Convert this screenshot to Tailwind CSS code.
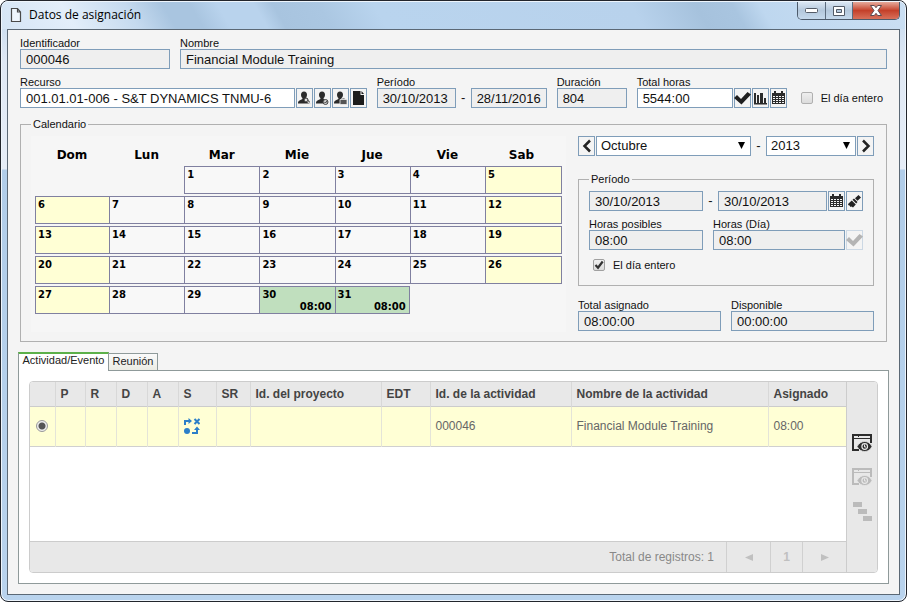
<!DOCTYPE html>
<html lang="es">

<head>
    <meta charset="UTF-8">
    <meta name="viewport" content="width=device-width, initial-scale=1.0">
    <title>Datos de asignación</title>
    <script src="https://cdn.jsdelivr.net/npm/@tailwindcss/browser@4"></script>
</head>

<body class="bg-white font-['Liberation_Sans',Arial,sans-serif] text-[11px] leading-3 text-[#111]">

<!-- Icon sprites -->
<svg class="hidden">
    <symbol id="user" viewBox="0 0 15 16">
        <path fill="#2b2b2b" d="M7 1.500c2 0 3 1.300 3 3.200 0 1.500-.6 2.700-1.400 3.400v1l3 1.300c1 .5 1.400 1.200 1.400 2.600v.5H1V13c0-1.400.5-2.100 1.500-2.600l2.900-1.300v-1C4.600 7.400 4 6.200 4 4.700c0-1.900 1-3.200 3-3.200z" />
    </symbol>
    <symbol id="calendar" viewBox="0 0 15 16">
        <path fill="#2b2b2b" d="M1 3h2V1h2v2h5V1h2v2h2v11H1z" />
        <path stroke="#f4f4f4" stroke-width="1" d="M2 6.500h11M2 8.500h11M2 10.500h11M2 12.500h11" stroke-dasharray="2 1" />
    </symbol>
    <symbol id="check" viewBox="0 0 17 16">
        <path fill="currentColor" d="M0 8l3-3 4 4 6.500-7L17 4.500 7.500 14.500z" />
    </symbol>
    <symbol id="view" viewBox="0 0 20 18">
        <path fill="none" stroke="currentColor" stroke-width="2" d="M7 16H1V1h18v8" />
        <path stroke="currentColor" stroke-width="1" d="M1 4.500h18M4 2.500h1M6 2.500h1" />
        <path stroke="#e8e8e8" stroke-width="1" d="M2 2.500h1M4 2.500h1M7 2.500h11" />
        <path fill="currentColor" stroke="#e8e8e8" stroke-width=".8" d="M5 12.500C7 9.200 9.500 7.500 12.700 7.500S18.300 9.200 20 12.500c-1.700 3.300-4 5-7.300 5S7 15.800 5 12.500z" />
        <circle cx="12.700" cy="12.500" r="2.800" fill="none" stroke="#e8e8e8" stroke-width="1.200" />
        <path stroke="#e8e8e8" d="M12.500 10.500v2.500h1.500" fill="none" />
    </symbol>
</svg>

<!-- Window frame -->
<div class="min-h-screen flex flex-col border border-[#22252c] rounded-lg px-[6px] pb-[6px] shadow-[inset_0_0_0_1px_#eef5fc] bg-[linear-gradient(180deg,#c3d9ef_0px,#dfe8f4_60px,#e6edf7_168px,#b1cde9_169px,#b9d3ed_100%)]">

    <!-- Title bar -->
    <header class="-mx-[5px] h-7 flex items-start rounded-t-md border-t border-[#eef5fc] bg-[linear-gradient(60deg,#d5e5f5_0%,#e3eefa_8%,#c5daef_15%,#a9c5e0_19%,#a9c5e0_22%,#b9d3ed_25%,#b9d3ed_29%,#a8c4df_31%,#abc7e2_36%,#b9d4ee_42%,#b8d2ec_70%,#a6c2dd_77%,#a9c5e0_81%,#bed7ef_84%,#cbdff3_100%)]">
        <div class="flex items-center gap-[7px] pl-2 pt-[5px]">
            <svg class="w-3 h-4" viewBox="0 0 12 16">
                <path fill="#eef5fc" stroke="#4a4a4a" stroke-width="1.200" d="M1.500 1.500h6l3 3.500v9.500h-9zM7.500 1.500V5h3" />
            </svg>
            <h1 class="font-['Open_Sans','Noto_Sans',sans-serif] text-xs leading-4 text-black">Datos de asignación</h1>
        </div>
        <div class="ml-auto mr-[5px] flex h-[18px] border border-t-0 border-[#4d5b6b] rounded-b-[5px] overflow-hidden">
            <button aria-label="Minimizar" class="w-[28px] flex justify-center items-center border-r border-[#5c6c7e] bg-linear-to-b from-[#dbe7f3] via-[#b4c8dc] to-[#c5d9ec]">
                <svg class="w-[13px] h-[5px]" viewBox="0 0 13 5"><rect x=".5" y=".5" width="12" height="4" rx="1" fill="#fff" stroke="#535b66" /></svg>
            </button>
            <button aria-label="Maximizar" class="w-[27px] flex justify-center items-center border-r border-[#5c6c7e] bg-linear-to-b from-[#dbe7f3] via-[#b4c8dc] to-[#c5d9ec]">
                <svg class="w-3 h-[10px]" viewBox="0 0 12 10"><path fill="#fff" fill-rule="evenodd" stroke="#535b66" d="M.5.5h11v9H.5zM3.500 3.500h5v3h-5z" /></svg>
            </button>
            <button aria-label="Cerrar" class="w-[46px] flex justify-center items-center bg-linear-to-b from-[#e5a99b] via-[#c4402a] to-[#d8705a]">
                <svg class="w-3 h-[11px]" viewBox="0 0 12 11"><path fill="#fff" stroke="#5d4a50" d="M.5.5h3.800L6 2.700 7.700.5h3.800L8 5.500l3.500 5H7.700L6 8.300l-1.700 2.200H.5L4 5.500z" /></svg>
            </button>
        </div>
    </header>

    <main class="flex-1 flex flex-col border border-[#5b6875] bg-[#f4f4f4] pt-[7px]">

        <!-- Assignment data -->
        <div class="px-3 flex flex-col gap-[7px]">
            <div class="flex gap-[10px]">
                <div class="w-[150px]">
                    <label for="identificador" class="block">Identificador</label>
                    <input id="identificador" readonly value="000046" class="block w-full h-5 px-[5px] text-[13px] border border-[#7f9db9] bg-[#efefef]">
                </div>
                <div class="flex-1">
                    <label for="nombre" class="block">Nombre</label>
                    <input id="nombre" readonly value="Financial Module Training" class="block w-full h-5 px-[5px] text-[13px] border border-[#7f9db9] bg-[#efefef]">
                </div>
            </div>

            <div class="flex items-end gap-[10px]">
                <div class="flex-1">
                    <label for="recurso" class="block">Recurso</label>
                    <div class="flex gap-px">
                        <input id="recurso" value="001.01.01-006 - S&amp;T DYNAMICS TNMU-6" class="flex-1 min-w-0 h-5 px-[5px] text-[13px] border border-[#7f9db9] bg-white">
                        <button aria-label="Buscar recurso" class="w-[17px] h-5 flex items-center justify-center border border-[#7f9db9]">
                            <svg class="w-[15px] h-4" viewBox="0 0 15 16"><use href="#user" /><circle cx="9" cy="10" r="2" fill="#ddd" stroke="#2b2b2b" /><path d="M10.500 11.500l3 2.500" stroke="#ddd" stroke-width="1.200" /></svg>
                        </button>
                        <button aria-label="Horario del recurso" class="w-[17px] h-5 flex items-center justify-center border border-[#7f9db9]">
                            <svg class="w-[15px] h-4" viewBox="0 0 15 16"><use href="#user" /><circle cx="10.500" cy="12" r="2.500" fill="#ccc" stroke="#444" /><path d="M9.500 12l1 1 1.500-2" stroke="#444" fill="none" /></svg>
                        </button>
                        <button aria-label="Agenda del recurso" class="w-[17px] h-5 flex items-center justify-center border border-[#7f9db9]">
                            <svg class="w-[15px] h-4" viewBox="0 0 15 16"><use href="#user" /><path d="M7 9.500h7v5H7zM9 9.500V8h3v1.500" fill="#555" stroke="#eee" stroke-width=".8" /></svg>
                        </button>
                        <button aria-label="Documento" class="w-[17px] h-5 flex items-center justify-center border border-[#7f9db9]">
                            <svg class="w-[15px] h-4" viewBox="0 0 15 16"><path fill="#1c1c1c" d="M2 1h7.500v4H13v10H2zM10.500 1L13 4h-2.500z" /></svg>
                        </button>
                    </div>
                </div>
                <fieldset class="flex items-end">
                    <div class="w-[79px]">
                        <label for="desde" class="block">Período</label>
                        <input id="desde" readonly value="30/10/2013" class="block w-full h-5 px-[5px] text-[13px] border border-[#7f9db9] bg-[#efefef]">
                    </div>
                    <span class="w-[15px] h-4 text-center text-[13px]">-</span>
                    <input aria-label="Hasta" readonly value="28/11/2016" class="w-[76px] h-5 px-[5px] text-[13px] border border-[#7f9db9] bg-[#efefef]">
                </fieldset>
                <div class="w-[70px]">
                    <label for="duracion" class="block">Duración</label>
                    <input id="duracion" readonly value="804" class="block w-full h-5 px-[5px] text-[13px] border border-[#7f9db9] bg-[#efefef]">
                </div>
                <div>
                    <label for="total" class="block">Total horas</label>
                    <div class="flex gap-px">
                        <input id="total" value="5544:00" class="w-24 h-5 px-[5px] text-[13px] border border-[#7f9db9] bg-white">
                        <button aria-label="Aplicar" class="w-[17px] h-5 flex items-center justify-center border border-[#7f9db9] text-[#1f1f1f]">
                            <svg class="w-[17px] h-4 shrink-0"><use href="#check" /></svg>
                        </button>
                        <button aria-label="Gráfico" class="w-[17px] h-5 flex items-center justify-center border border-[#7f9db9]">
                            <svg class="w-[15px] h-4" viewBox="0 0 15 16"><path fill="#2b2b2b" d="M1 3h2v10H1zM4 5h2v8H4zM7 3h3v10H7zM11 8h2v5h-2zM1 13h13v1.500H1z" /></svg>
                        </button>
                        <button aria-label="Calendario" class="w-[17px] h-5 flex items-center justify-center border border-[#7f9db9]">
                            <svg class="w-[15px] h-4"><use href="#calendar" /></svg>
                        </button>
                    </div>
                </div>
                <label class="h-5 ml-1 pr-1 flex items-center gap-2">
                    <input type="checkbox" class="appearance-none size-3 border border-[#b0b0b0] rounded-xs bg-linear-to-b from-[#eee] to-[#dcdcdc]">
                    El día entero
                </label>
            </div>
        </div>

        <!-- Calendar -->
        <fieldset class="mx-3 mt-[10px] px-[10px] pb-[9px] border border-[#b0b0b0] min-w-0">
            <legend class="px-[2px]">Calendario</legend>
            <div class="flex gap-3 pt-[6px] pr-[2px]">
                <div class="flex-1 px-1 pt-1 pb-4 bg-[#f6f6f6]">
                    <table class="w-full table-fixed border-separate border-spacing-x-0 border-spacing-y-[2px] font-['DejaVu_Sans',Verdana,sans-serif] font-bold text-[10px] text-black">
                        <thead>
                            <tr class="h-[22px] text-xs">
                                <th class="w-[74px] pt-1">Dom</th>
                                <th class="pt-1">Lun</th>
                                <th class="pt-1">Mar</th>
                                <th class="pt-1">Mie</th>
                                <th class="pt-1">Jue</th>
                                <th class="pt-1">Vie</th>
                                <th class="w-[77px] pt-1 pr-1">Sab</th>
                            </tr>
                        </thead>
                        <tbody id="days">
                            <!-- Updated dynamically -->
                        </tbody>
                    </table>
                </div>

                <div class="w-[296px] text-[11px]">
                    <!-- Month selector -->
                    <div class="flex items-center gap-px">
                        <button aria-label="Mes anterior" class="w-[17px] h-5 flex items-center justify-center border border-[#7f9db9]">
                            <svg class="w-[10px] h-[14px]" viewBox="0 0 10 14"><path d="M8 1.500L2.500 7 8 12.500" fill="none" stroke="#222" stroke-width="2.500" /></svg>
                        </button>
                        <div class="relative flex-1">
                            <select aria-label="Mes" class="appearance-none block w-full h-5 px-1 text-[13px] leading-[18px] border border-[#7f9db9] bg-white">
                                <option>Octubre</option>
                            </select>
                            <svg class="absolute right-[6px] top-[6px] w-[7px] h-[7px] pointer-events-none" viewBox="0 0 7 7"><path d="M0 0h7L3.500 7z" /></svg>
                        </div>
                        <span class="w-[13px] text-center text-[13px]">-</span>
                        <div class="relative w-[90px]">
                            <select aria-label="Año" class="appearance-none block w-full h-5 px-1 text-[13px] leading-[18px] border border-[#7f9db9] bg-white">
                                <option>2013</option>
                            </select>
                            <svg class="absolute right-[6px] top-[6px] w-[7px] h-[7px] pointer-events-none" viewBox="0 0 7 7"><path d="M0 0h7L3.500 7z" /></svg>
                        </div>
                        <button aria-label="Mes siguiente" class="w-[17px] h-5 flex items-center justify-center border border-[#7f9db9]">
                            <svg class="w-[10px] h-[14px]" viewBox="0 0 10 14"><path d="M2 1.500L7.500 7 2 12.500" fill="none" stroke="#222" stroke-width="2.500" /></svg>
                        </button>
                    </div>

                    <!-- Period -->
                    <fieldset class="mt-[17px] min-w-0 px-[10px] pb-[14px] border border-[#b0b0b0]">
                        <legend class="px-[2px]">Período</legend>
                        <div class="flex items-center gap-px pt-[6px]">
                            <input aria-label="Desde" readonly value="30/10/2013" class="w-[114px] h-5 px-[5px] text-[13px] border border-[#7f9db9] bg-[#efefef]">
                            <span class="w-[13px] text-center text-[13px]">-</span>
                            <input aria-label="Hasta" readonly value="30/10/2013" class="flex-1 min-w-0 h-5 px-[5px] text-[13px] border border-[#7f9db9] bg-[#efefef]">
                            <button aria-label="Elegir fecha" class="w-[17px] h-5 flex items-center justify-center border border-[#7f9db9]">
                                <svg class="w-[15px] h-4"><use href="#calendar" /></svg>
                            </button>
                            <button aria-label="Limpiar" class="w-[17px] h-5 flex items-center justify-center border border-[#7f9db9]">
                                <svg class="w-[15px] h-4" viewBox="0 0 15 16"><path fill="#222" d="M11.500 2L14 4.500l-3.500 3.200L8 5.200zM7 5.500L10.500 9 9.200 10.500 5.500 6.800zM4.800 7.500l4 4L6 14.500l-1.500-1-1 .5-1-1.500L1 12l.5-1.500z" /></svg>
                            </button>
                        </div>
                        <div class="flex items-end mt-[7px]">
                            <div class="w-[114px] mr-[10px]">
                                <label for="posibles" class="block">Horas posibles</label>
                                <input id="posibles" readonly value="08:00" class="block w-full h-5 px-[5px] text-[13px] border border-[#7f9db9] bg-[#efefef]">
                            </div>
                            <div class="flex-1 min-w-0 mr-px">
                                <label for="dia" class="block">Horas (Día)</label>
                                <input id="dia" readonly value="08:00" class="block w-full h-5 px-[5px] text-[13px] border border-[#7f9db9] bg-[#efefef]">
                            </div>
                            <button aria-label="Aplicar horas" disabled class="w-[17px] h-5 flex items-center justify-center border border-[#ccd8e4] text-[#b4b4b4]">
                                <svg class="w-[17px] h-4 shrink-0"><use href="#check" /></svg>
                            </button>
                        </div>
                        <label class="mt-[9px] ml-1 flex items-center gap-2">
                            <span class="relative size-3">
                                <input type="checkbox" checked class="appearance-none block size-3 border border-[#a0a0a0] rounded-xs bg-linear-to-b from-[#f0f0f0] to-[#dcdcdc]">
                                <svg class="absolute inset-0 size-3 pointer-events-none" viewBox="0 0 12 12"><path d="M2.500 6l2.500 2.700L9.700 2.500" fill="none" stroke="#333" stroke-width="2.200" /></svg>
                            </span>
                            El día entero
                        </label>
                    </fieldset>

                    <div class="flex gap-[10px] mt-[13px]">
                        <div class="flex-1">
                            <label for="asignado" class="block">Total asignado</label>
                            <input id="asignado" readonly value="08:00:00" class="block w-full h-5 px-[5px] text-[13px] border border-[#7f9db9] bg-[#efefef]">
                        </div>
                        <div class="flex-1">
                            <label for="disponible" class="block">Disponible</label>
                            <input id="disponible" readonly value="00:00:00" class="block w-full h-5 px-[5px] text-[13px] border border-[#7f9db9] bg-[#efefef]">
                        </div>
                    </div>
                </div>
            </div>
        </fieldset>

        <!-- Tabs -->
        <div class="relative mx-[10px] mt-[10px] flex items-end text-[#222]">
            <button class="h-[19px] w-[91px] pb-[6px] -mb-px border-x border-t-2 border-x-[#8f9a9a] border-t-[#5cb04a] bg-white whitespace-nowrap">Actividad/Evento</button>
            <button class="h-[18px] w-[50px] pb-[2px] -ml-px -mb-px border border-[#8f9a9a] bg-linear-to-b from-[#fafafa] to-[#ecece4] whitespace-nowrap">Reunión</button>
            <span class="flex-1 -mb-px border-b border-[#8f9a9a]"></span>
        </div>

        <!-- Activity grid -->
        <section class="flex-1 flex mx-[10px] mb-[10px] px-[10px] pt-[11px] pb-[10px] border border-t-0 border-[#8f9a9a] bg-white">
            <div class="flex-1 flex border border-[#ccc] rounded-sm overflow-hidden text-xs leading-4 text-[#666]">
                <div class="flex-1 flex flex-col">
                    <table class="w-full table-fixed text-left">
                        <thead class="text-[#444]">
                            <tr class="h-[24px] bg-[#e8e8e8] border-b border-[#ccc]">
                                <th class="w-[25px] border-r border-[#d8d8d8]"></th>
                                <th class="w-[30px] px-[5px] border-r border-[#d8d8d8]">P</th>
                                <th class="w-[31px] px-[5px] border-r border-[#d8d8d8]">R</th>
                                <th class="w-[31px] px-[5px] border-r border-[#d8d8d8]">D</th>
                                <th class="w-[31px] px-[5px] border-r border-[#d8d8d8]">A</th>
                                <th class="w-[38px] px-[5px] border-r border-[#d8d8d8]">S</th>
                                <th class="w-[34px] px-[5px] border-r border-[#d8d8d8]">SR</th>
                                <th class="w-[131px] px-[5px] border-r border-[#d8d8d8]">Id. del proyecto</th>
                                <th class="w-[49px] px-[5px] border-r border-[#d8d8d8]">EDT</th>
                                <th class="w-[141px] px-[5px] border-r border-[#d8d8d8]">Id. de la actividad</th>
                                <th class="px-[5px] border-r border-[#d8d8d8]">Nombre de la actividad</th>
                                <th class="w-[78px] px-[5px]">Asignado</th>
                            </tr>
                        </thead>
                        <tbody>
                            <tr class="h-10 bg-[#ffffd5] border-b border-[#d0d0d0]">
                                <td class="border-r border-[#e4e4d8]">
                                    <input type="radio" checked aria-label="000046" class="appearance-none block mx-auto size-3 rounded-full border border-[#999] bg-[radial-gradient(circle,#555_3px,#eee_4px)]">
                                </td>
                                <td class="border-r border-[#e4e4d8]"></td>
                                <td class="border-r border-[#e4e4d8]"></td>
                                <td class="border-r border-[#e4e4d8]"></td>
                                <td class="border-r border-[#e4e4d8]"></td>
                                <td class="px-[5px] border-r border-[#e4e4d8]">
                                    <svg class="size-4" viewBox="0 0 16 16">
                                        <path fill="none" stroke="#2c7fc9" stroke-width="2" d="M1 7V3h4M8 15h5v-4M10.500 1l5 5M15.500 1l-5 5" />
                                        <path fill="#2c7fc9" d="M4.500 0L8 3 4.500 6zM10 12l3-3.500 3 3.500z" />
                                        <circle cx="3" cy="13" r="3" fill="#2c7fc9" />
                                    </svg>
                                </td>
                                <td class="border-r border-[#e4e4d8]"></td>
                                <td class="border-r border-[#e4e4d8]"></td>
                                <td class="border-r border-[#e4e4d8]"></td>
                                <td class="px-[5px] border-r border-[#e4e4d8]">000046</td>
                                <td class="px-[5px] border-r border-[#e4e4d8]">Financial Module Training</td>
                                <td class="px-[5px]">08:00</td>
                            </tr>
                        </tbody>
                    </table>

                    <!-- Pager -->
                    <div class="mt-auto h-[31px] flex items-stretch justify-end border-t border-[#ccc] bg-[#e8e8e8] text-[#888]">
                        <span class="self-center pr-3">Total de registros: 1</span>
                        <button disabled aria-label="Página anterior" class="w-11 flex items-center justify-center border-l border-[#d0d0d0]">
                            <svg class="w-2 h-[7px]" viewBox="0 0 8 7"><path fill="#c0c0c0" d="M8 0v7L0 3.500z" /></svg>
                        </button>
                        <button disabled class="w-8 border-l border-[#d0d0d0] font-bold text-[#c0c0c0]">1</button>
                        <button disabled aria-label="Página siguiente" class="w-11 flex items-center justify-center border-l border-[#d0d0d0]">
                            <svg class="w-2 h-[7px]" viewBox="0 0 8 7"><path fill="#c0c0c0" d="M0 0v7l8-3.500z" /></svg>
                        </button>
                    </div>
                </div>

                <!-- Side actions -->
                <aside class="w-[31px] flex flex-col items-center gap-4 pt-[52px] border-l border-[#ccc] bg-[#e8e8e8]">
                    <button aria-label="Ver actividad" class="text-[#2d2d2d]"><svg class="block w-5 h-[18px]"><use href="#view" /></svg></button>
                    <button disabled aria-label="Ver proyecto" class="text-[#bbb]"><svg class="block w-5 h-[18px]"><use href="#view" /></svg></button>
                    <button disabled aria-label="Ver Gantt">
                        <svg class="block w-5 h-5" viewBox="0 0 20 20"><path fill="#bbb" d="M1 0h9v5H1zM6 7h9v5H6zM11 14h9v5h-9z" /></svg>
                    </button>
                </aside>
            </div>
        </section>
    </main>
</div>

<script>
    const firstDay = 2;
    const lastDay = 31;
    const hours = { 30: "08:00", 31: "08:00" };
    let html = "";

    for (let week = 0; week < 5; week++) {
        html += '<tr class="h-7">';
        for (let col = 0; col < 7; col++) {
            const day = week * 7 + col - firstDay + 1;
            if (day < 1 || day > lastDay) {
                html += "<td></td>";
                continue;
            }
            let bg = "bg-[#f8f8f8]";
            if (col === 0 || col === 6) bg = "bg-[#ffffd5]";
            if (hours[day]) bg = "bg-[#c0dfbe]";
            const edge = col === 6 || day === lastDay ? "border-r" : "";
            html += `<td class="h-7 px-[2px] align-top border-y border-l border-[#8080a0] ${edge} ${bg}">
                <div class="pt-[2px]">${day}</div>
                ${hours[day] ? `<div class="text-right pr-px">${hours[day]}</div>` : ""}
            </td>`;
        }
        html += "</tr>";
    }
    document.getElementById("days").innerHTML = html;
</script>

</body>

</html>
